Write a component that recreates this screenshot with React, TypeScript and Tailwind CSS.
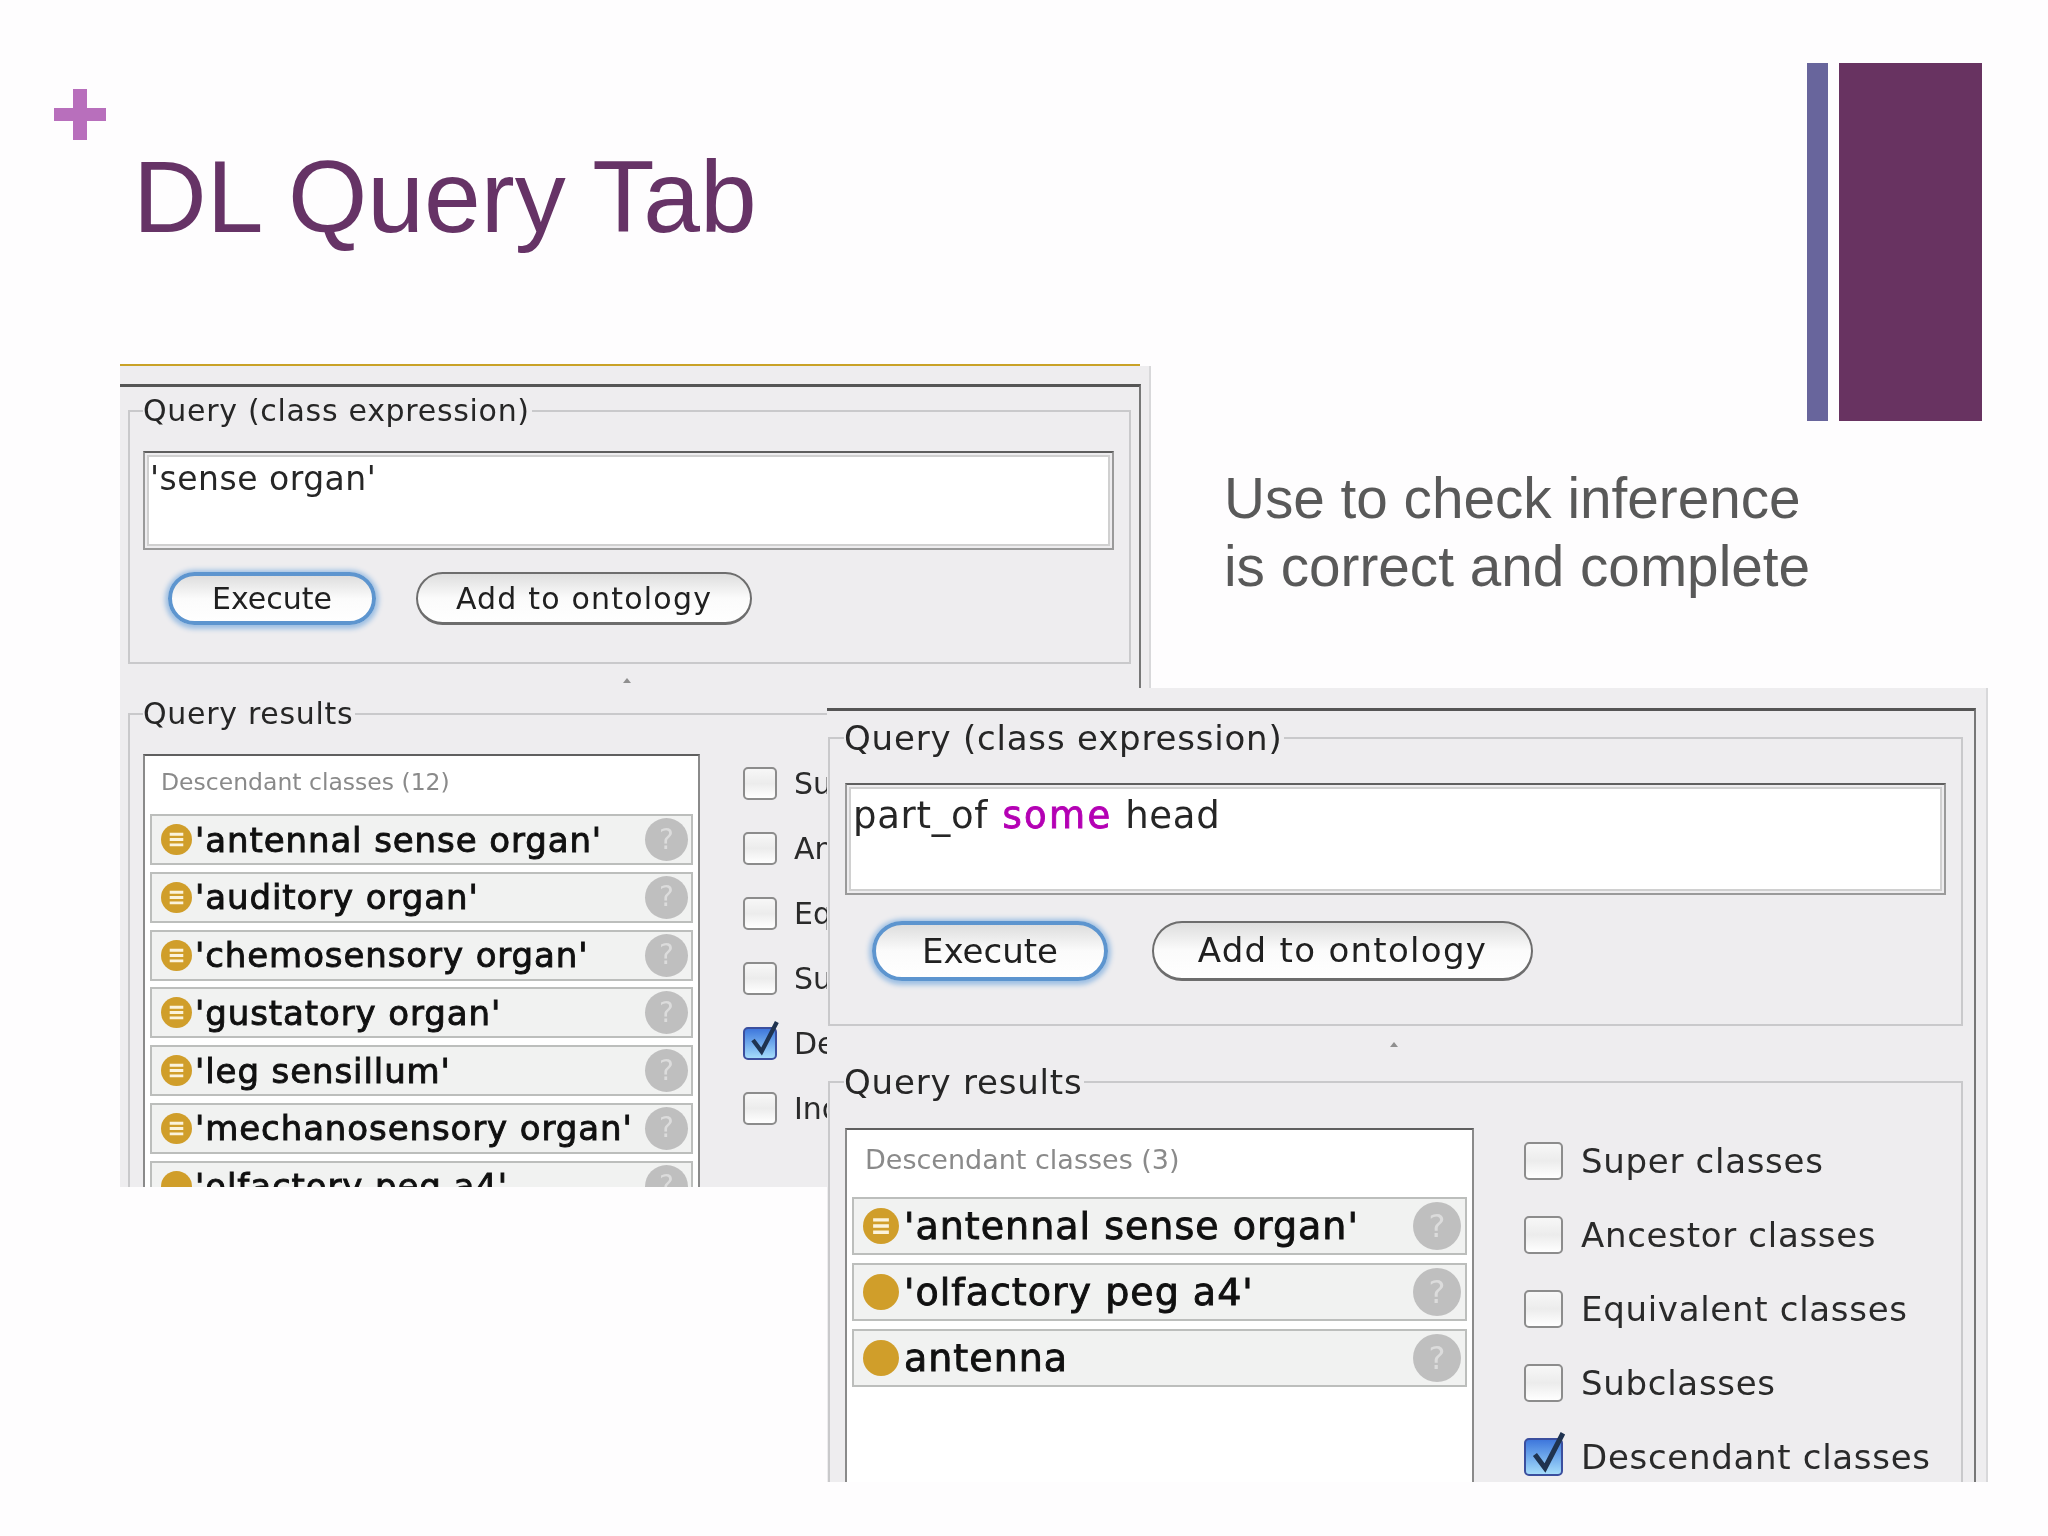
import React from 'react';

type Size = 'sm' | 'lg';

const sizes = {
  sm: {
    legend: 'text-[30px] leading-[34px] ml-[13px] tracking-[0.7px]',
    inputText: 'text-[33px] leading-[38px] pl-[1px] pt-[3px] tracking-[0.5px]',
    button: 'h-[53px] text-[30px]',
    label: 'text-[30px] leading-[33px]',
    listTitle: 'text-[23.5px] leading-[30px] ml-[16px] mt-[11px] mb-[17px]',
    rows: 'mx-[5px] gap-[6.75px]',
    row: 'h-[51px] pl-[9px] pr-[3px]',
    rowText: 'text-[34px] leading-[38px] ml-[3px] tracking-[0.9px]',
    dot: 'w-[31px] h-[31px]',
    help: 'w-[43px] h-[43px] text-[28px]',
    check: 'w-[34px] h-[33px]',
    option: 'gap-[17px]',
  },
  lg: {
    legend: 'text-[34px] leading-[38px] ml-[14px] tracking-[0.8px]',
    inputText: 'text-[37px] leading-[44px] pl-[2px] pt-[5px] tracking-[0.7px]',
    button: 'h-[60px] text-[34px]',
    label: 'text-[34px] leading-[40px] tracking-[0.7px]',
    listTitle: 'text-[27px] leading-[34px] ml-[18px] mt-[13px] mb-[20px]',
    rows: 'mx-[5px] gap-[8px]',
    row: 'h-[58px] pl-[9px] pr-[4px]',
    rowText: 'text-[38px] leading-[42px] ml-[5px] tracking-[1px]',
    dot: 'w-[36px] h-[36px]',
    help: 'w-[48px] h-[48px] text-[32px]',
    check: 'w-[39px] h-[38px]',
    option: 'gap-[18px]',
  },
};

const options = ['Super classes', 'Ancestor classes', 'Equivalent classes', 'Subclasses', 'Descendant classes', 'Individuals'];

const ClassDot = ({ size, defined }: { size: Size; defined: boolean }) => (
  <svg viewBox="0 0 32 32" className={`shrink-0 ${sizes[size].dot}`}>
    <circle cx="16" cy="16" r="16" fill="#d09e2a" />
    {defined && <path d="M9 10.5h14M9 16h14M9 21.5h14" stroke="#fbf3dc" strokeWidth="3" />}
  </svg>
);

const ResultRow = ({ size, name, defined = true }: { size: Size; name: string; defined?: boolean }) => (
  <div className={`flex items-center border-2 border-[#bcbebc] bg-[#f1f2f1] ${sizes[size].row}`}>
    <ClassDot size={size} defined={defined} />
    <span className={`text-[#101010] whitespace-nowrap [-webkit-text-stroke:0.9px_#101010] ${sizes[size].rowText}`}>{name}</span>
    <span className={`ml-auto shrink-0 rounded-full bg-[#bfbfbf] text-[#dcdcdc] flex items-center justify-center ${sizes[size].help}`}>?</span>
  </div>
);

const CheckOption = ({ size, label, checked }: { size: Size; label: string; checked: boolean }) => (
  <div className={`flex items-center whitespace-nowrap ${sizes[size].option}`}>
    <span
      className={`relative shrink-0 rounded-[5px] border-2 ${sizes[size].check} ${
        checked
          ? 'border-[#3b4f9e] bg-linear-to-b from-[#3f77dc] to-[#a5dcfa]'
          : 'border-[#8c8c8c] bg-linear-to-b from-[#f7f7f7] via-[#ececec] to-[#ffffff]'
      }`}
    >
      {checked && (
        <svg viewBox="0 0 34 38" className="absolute left-[2px] -top-[9px] w-[110%] h-[125%] overflow-visible">
          <path d="M6 21l9 12L31 2" fill="none" stroke="#1f3350" strokeWidth="4.5" />
        </svg>
      )}
    </span>
    <span className={`text-[#2a2a2a] ${sizes[size].label}`}>{label}</span>
  </div>
);

const PillButton = ({ size, label, primary, className }: { size: Size; label: string; primary?: boolean; className: string }) => (
  <div
    className={`flex items-center justify-center rounded-full bg-linear-to-b from-[#dedede] via-[#fbfbfb] to-white text-[#202020] ${sizes[size].button} ${className} ${
      primary ? 'border-[4px] border-[#5d95cf] shadow-[0_1px_5px_3px_#9dbfe3]' : 'border-2 border-[#6d6d6d] border-b-[3px]'
    }`}
  >
    {label}
  </div>
);

const Splitter = ({ className }: { className: string }) => (
  <svg viewBox="0 0 10 8" className={`w-[10px] h-[8px] ${className}`}>
    <path d="M1 7l4-5 4 5" fill="#8f8f8f" />
  </svg>
);

type PanelProps = {
  size: Size;
  query: React.ReactNode;
  title: string;
  rows: { name: string; defined?: boolean }[];
  box: string;
  topBar: string;
  queryField: string;
  inputBox: string;
  buttonRow: string;
  executeWidth: string;
  addWidth: string;
  splitter: string;
  resultsField: string;
  listBox: string;
  optionList: string;
};

const QueryPanel = (p: PanelProps) => (
  <div className={`absolute overflow-hidden bg-[#eeedef] blur-[0.6px] ${p.box}`}>
    <div className={`border-t-[3px] border-r-2 border-t-[#555555] border-r-[#777777] h-full ${p.topBar}`}>
      <fieldset className={`border-2 border-[#c9c9cb] ${p.queryField}`}>
        <legend className={`text-[#262626] pr-[2px] ${sizes[p.size].legend}`}>Query (class expression)</legend>
        <div className={`border-2 border-[#9a9a9a] border-t-[#5f5f5f] p-[2px] ${p.inputBox}`}>
          <div className={`h-full bg-white border-2 border-[#d0d0d0] text-[#262626] ${sizes[p.size].inputText}`}>{p.query}</div>
        </div>
        <div className={`flex items-center ${p.buttonRow}`}>
          <PillButton size={p.size} label="Execute" primary className={p.executeWidth} />
          <PillButton size={p.size} label="Add to ontology" className={p.addWidth} />
        </div>
      </fieldset>
      <Splitter className={p.splitter} />
      <fieldset className={`border-2 border-[#c9c9cb] ${p.resultsField}`}>
        <legend className={`text-[#262626] pr-[2px] ${sizes[p.size].legend}`}>Query results</legend>
        <div className="flex">
          <div className={`shrink-0 bg-white border-2 border-[#8a8a8a] border-t-[#5f5f5f] ${p.listBox}`}>
            <div className={`text-[#8a8a8a] ${sizes[p.size].listTitle}`}>{p.title}</div>
            <div className={`flex flex-col ${sizes[p.size].rows}`}>
              {p.rows.map((row) => (
                <ResultRow key={row.name} size={p.size} name={row.name} defined={row.defined} />
              ))}
            </div>
          </div>
          <div className={`flex flex-col ${p.optionList}`}>
            {options.map((label) => (
              <CheckOption key={label} size={p.size} label={label} checked={label === 'Descendant classes'} />
            ))}
          </div>
        </div>
      </fieldset>
    </div>
  </div>
);

export default function App() {
  return (
    <div className="relative w-[2048px] h-[1536px] overflow-hidden bg-[#fefdfe] font-['DejaVu_Sans',sans-serif]">
      {/* slide decoration */}
      <div className="absolute left-[54px] top-[89px] w-[52px] h-[51px] text-[#b86fbc]">
        <div className="absolute left-[19px] top-0 w-[14px] h-full bg-current" />
        <div className="absolute left-0 top-[19px] w-full h-[13px] bg-current" />
      </div>
      <div className="absolute left-[1807px] top-[63px] w-[21px] h-[358px] bg-[#68659c]" />
      <div className="absolute left-[1839px] top-[63px] w-[143px] h-[358px] bg-[#683361]" />

      <h1 className="absolute left-[133px] top-[140px] text-[102px] leading-[115px] text-[#663366] font-['Liberation_Sans',sans-serif] whitespace-nowrap">
        DL Query Tab
      </h1>
      <p className="absolute left-[1224px] top-[465px] text-[56.7px] leading-[68px] text-[#595959] font-['Liberation_Sans',sans-serif] whitespace-nowrap">
        Use to check inference
        <br />
        is correct and complete
      </p>

      {/* first screenshot */}
      <div className="absolute left-[120px] top-[364px] w-[1020px] h-[2px] bg-[#c9a227]" />
      <QueryPanel
        size="sm"
        box="left-[120px] top-[366px] w-[1031px] h-[821px] border-r-2 border-r-[#d8d8da]"
        topBar="mt-[18px] w-[1021px] pt-[7px]"
        query="'sense organ'"
        queryField="ml-[8px] w-[1003px] h-[270px]"
        inputBox="ml-[13px] mt-[23px] w-[971px] h-[99px]"
        buttonRow="ml-[38px] mt-[22px] gap-[40px]"
        executeWidth="w-[208px]"
        addWidth="w-[336px] tracking-[1.2px]"
        splitter="ml-[502px] mt-[12px]"
        resultsField="ml-[8px] mt-[13px] w-[1003px]"
        title="Descendant classes (12)"
        rows={[
          { name: "'antennal sense organ'" },
          { name: "'auditory organ'" },
          { name: "'chemosensory organ'" },
          { name: "'gustatory organ'" },
          { name: "'leg sensillum'" },
          { name: "'mechanosensory organ'" },
          { name: "'olfactory peg a4'", defined: false },
        ]}
        listBox="ml-[13px] mt-[23px] w-[557px] h-[520px]"
        optionList="ml-[43px] mt-[36px] gap-[32px]"
      />

      {/* second screenshot, lies over the first */}
      <QueryPanel
        size="lg"
        box="left-[827px] top-[688px] w-[1161px] h-[794px] border-r-2 border-r-[#d8d8da]"
        topBar="mt-[20px] w-[1149px] pt-[8px]"
        query={
          <>
            part_of <span className="ml-[2px] text-[#b400b4] tracking-[2.4px] [-webkit-text-stroke:0.9px_#b400b4]">some</span> head
          </>
        }
        queryField="ml-[1px] w-[1135px] h-[307px]"
        inputBox="ml-[15px] mt-[26px] w-[1101px] h-[112px]"
        buttonRow="ml-[42px] mt-[26px] gap-[44px]"
        executeWidth="w-[236px]"
        addWidth="w-[381px] tracking-[1.3px]"
        splitter="ml-[562px] mt-[14px]"
        resultsField="ml-[1px] mt-[15px] w-[1135px]"
        title="Descendant classes (3)"
        rows={[
          { name: "'antennal sense organ'" },
          { name: "'olfactory peg a4'", defined: false },
          { name: 'antenna', defined: false },
        ]}
        listBox="ml-[15px] mt-[27px] w-[629px] h-[400px]"
        optionList="ml-[50px] mt-[40px] gap-[34px]"
      />
    </div>
  );
}
